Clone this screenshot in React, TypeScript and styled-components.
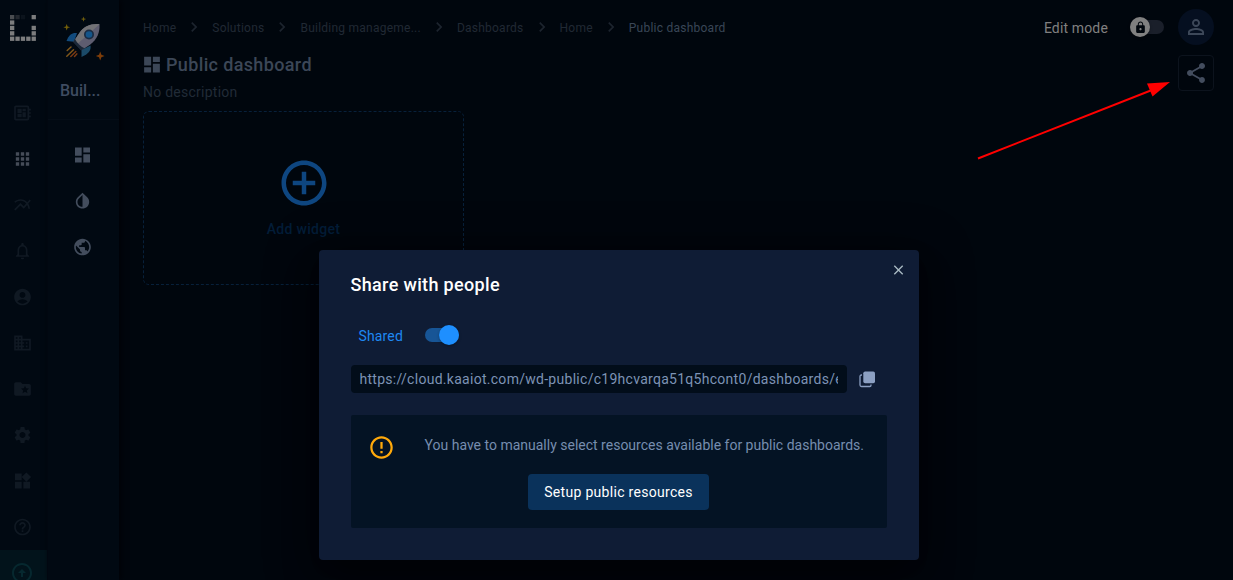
import React from 'react';
import styled, { createGlobalStyle } from 'styled-components';
import {
  MdDeveloperBoard, MdApps, MdMultilineChart, MdNotificationsNone, MdAccountCircle, MdBusiness,
  MdFolderSpecial, MdSettings, MdWidgets, MdHelpOutline, MdArrowCircleUp, MdDashboard, MdInvertColors,
  MdPublic, MdChevronRight, MdLock, MdPersonOutline, MdShare, MdAddCircleOutline, MdErrorOutline, MdClose,
} from 'react-icons/md';

const GlobalStyle = createGlobalStyle`
  * { box-sizing: border-box; }
  body { margin: 0; background: #00060d; font-family: Roboto, "Liberation Sans", sans-serif; overflow: hidden; }
  svg { display: block; flex: none; }
`;

const Page = styled.div`
  display: flex;
  height: 580px;
  width: 1233px;
  position: relative;
  overflow: hidden;
  background: #00060d;
`;

const Rail = styled.nav`
  width: 47px;
  height: 580px;
  flex: none;
  display: flex;
  flex-direction: column;
  background: #010912;
  overflow: hidden;
`;

const LogoSlot = styled.div`
  height: 90px;
  flex: none;
  padding: 15px 0 0 10px;
`;

const RailItem = styled.div<{ $active?: boolean }>`
  height: 46px;
  flex: none;
  display: flex;
  align-items: center;
  padding-left: 12px;
  color: ${p => (p.$active ? '#454c58' : '#101923')};
  font-size: 20px;
  svg { width: 21px; }
`;

const UpgradeItem = styled.div`
  height: 46px;
  flex: none;
  display: flex;
  justify-content: center;
  padding-right: 3px;
  align-items: center;
  background: #02131b;
  color: #06282f;
  font-size: 24px;
`;

const SolutionBar = styled.aside`
  width: 72px;
  height: 580px;
  flex: none;
  background: #010912;
  border-left: 1px solid #010710;
  box-shadow: 2px 0 6px #000207;
  display: flex;
  flex-direction: column;
`;

const SolutionHead = styled.div`
  height: 120px;
  border-bottom: 1px solid #050d17;
  padding: 15px 0 0 12px;
`;

const SolutionName = styled.div`
  margin-top: 18px;
  font-size: 16px;
  line-height: 20px;
  font-weight: 500;
  color: #3f4c61;
`;

const SolutionItem = styled.div`
  height: 46px;
  display: flex;
  align-items: center;
  padding-left: 24px;
  color: #434d5d;
  font-size: 20px;
  svg { width: 21px; }
  &:first-of-type { margin-top: 12px; }
`;

const SolutionNav = styled.div`
  display: flex;
  flex-direction: column;
`;

const Main = styled.main`
  flex: 1;
  min-width: 0;
  padding: 9px 19px 0 24px;
  display: flex;
  flex-direction: column;
`;

const TopBar = styled.header`
  height: 36px;
  display: flex;
  align-items: center;
  justify-content: space-between;
`;

const Crumbs = styled.div`
  display: flex;
  align-items: center;
  font-size: 12px;
  letter-spacing: 0.24px;
  line-height: 20px;
  color: #202934;
  svg { margin: 0 8px; font-size: 20px; color: #1c242e; }
`;

const Crumb = styled.span<{ $current?: boolean }>`
  padding-top: 2px;
  color: ${p => (p.$current ? '#3a4657' : 'inherit')};
`;

const Tools = styled.div`
  display: flex;
  align-items: center;
`;

const EditLabel = styled.span`
  padding-top: 2px;
  font-size: 14px;
  letter-spacing: 0.15px;
  color: #808080;
  margin-right: 22px;
`;

const Track = styled.div<{ $on?: boolean }>`
  width: 34px;
  height: 14px;
  border-radius: 7px;
  display: flex;
  align-items: center;
  justify-content: ${p => (p.$on ? 'flex-end' : 'flex-start')};
  background: ${p => (p.$on ? '#175596' : '#1a1f2a')};
`;

const Thumb = styled.div<{ $on?: boolean }>`
  width: 20px;
  height: 20px;
  flex: none;
  border-radius: 50%;
  display: flex;
  align-items: center;
  justify-content: center;
  font-size: 13px;
  background: ${p => (p.$on ? '#1e8fff' : '#808080')};
  color: #00060d;
  box-shadow: 0 1px 3px rgba(0, 0, 0, 0.3);
`;

const Avatar = styled.div`
  width: 36px;
  height: 36px;
  border-radius: 50%;
  margin-left: 14px;
  display: flex;
  align-items: center;
  justify-content: center;
  background: #050f20;
  color: #3d4859;
  font-size: 24px;
`;

const TitleRow = styled.div`
  height: 38px;
  display: flex;
  justify-content: space-between;
`;

const Title = styled.h1`
  margin: 0 0 0 -2px;
  height: 38px;
  display: flex;
  align-items: center;
  gap: 3px;
  font-size: 18px;
  font-weight: 500;
  letter-spacing: 0.36px;
  color: #3c4757;
  svg { font-size: 21px; width: 22px; }
`;

const ShareButton = styled.div`
  width: 36px;
  height: 36px;
  margin-top: 10px;
  border: 1px solid #0c131d;
  border-radius: 4px;
  display: flex;
  align-items: center;
  justify-content: center;
  font-size: 24px;
  color: #434d5e;
`;

const Description = styled.p`
  margin: -1px 0 0;
  height: 20px;
  line-height: 20px;
  font-size: 14px;
  letter-spacing: 0.25px;
  color: #212b37;
`;

const AddCard = styled.div`
  width: 321px;
  height: 174px;
  margin-top: 9px;
  display: flex;
  flex-direction: column;
  align-items: center;
  padding-top: 44px;
  gap: 11px;
  border: 1px dashed #07203a;
  border-radius: 6px;
  font-size: 14px;
  font-weight: 500;
  letter-spacing: 0.3px;
  color: #031d38;
  svg { font-size: 54px; color: #0e4680; }
`;

const Dialog = styled.section`
  position: absolute;
  left: 319px;
  top: 250px;
  width: 600px;
  height: 310px;
  border-radius: 4px;
  background: #0f1c35;
  box-shadow: 0 11px 15px -7px rgba(0,0,0,.2), 0 24px 38px 3px rgba(0,0,0,.14), 0 9px 46px 8px rgba(0,0,0,.4);
  padding: 22px 32px 0;
  display: flex;
  flex-direction: column;
`;

const DialogHead = styled.div`
  display: flex;
  justify-content: space-between;
  height: 26px;
`;

const DialogTitle = styled.h2`
  margin: 0 0 0 -0.5px;
  font-size: 18px;
  line-height: 26px;
  font-weight: 500;
  letter-spacing: 0.34px;
  color: #fff;
`;

const CloseIcon = styled.div`
  margin: -10px -20px 0 0;
  font-size: 16px;
  color: #a9bac3;
  svg { width: 17px; }
`;

const SharedRow = styled.div`
  height: 20px;
  margin: 27px 0 0 7.5px;
  display: flex;
  align-items: center;
  gap: 22.5px;
  font-size: 14px;
  letter-spacing: 0.15px;
  color: #1e88f2;
`;

const SharedLabel = styled.span`
  padding-top: 2px;
`;

const LinkRow = styled.div`
  margin-top: 20px;
  display: flex;
  align-items: center;
  gap: 12.5px;
`;

const LinkInput = styled.input`
  width: 495.5px;
  height: 28px;
  padding: 0 8.5px;
  border: 0;
  outline: 0;
  border-radius: 4px;
  background: #020d1a;
  font: 14px/28px Roboto, "Liberation Sans", sans-serif;
  letter-spacing: 0.28px;
  color: #7d93b5;
`;

const Notice = styled.div`
  width: 536px;
  height: 113px;
  margin-top: 22px;
  border-radius: 2px;
  background: #041324;
  padding: 19.5px 23px 0 17px;
  display: flex;
  justify-content: space-between;
  > svg { margin-top: -0.5px; font-size: 27px; color: #ffa90b; }
`;

const NoticeBody = styled.div`
  display: flex;
  flex-direction: column;
  align-items: flex-start;
  font-size: 14px;
  line-height: 20px;
  color: #768daf;
  white-space: nowrap;
`;

const SetupButton = styled.button`
  margin: 19.5px 0 0 103px;
  width: 181px;
  height: 36px;
  padding: 0 0 0 1px;
  border: 0;
  border-radius: 4px;
  background: #0a325b;
  color: #fff;
  font: 14px Roboto, sans-serif;
  letter-spacing: 0.3px;
`;

const ArrowOverlay = styled.svg`
  position: absolute;
  left: 970px;
  top: 70px;
`;

const LOGO_CELLS: [number, number, string][] = [
  [0, 0, '#4a4d51'], [1, 0, '#22272e'], [2, 0, '#0b131c'], [4, 0, '#7c7d7e'],
  [0, 1, '#7c7d7e'], [0, 2, '#7c7d7e'], [4, 2, '#7c7d7e'], [0, 3, '#7c7d7e'], [4, 3, '#7c7d7e'],
  [0, 4, '#7c7d7e'], [1, 4, '#7c7d7e'], [2, 4, '#7c7d7e'], [3, 4, '#7c7d7e'], [4, 4, '#7c7d7e'],
];

const Logo = () => (
  <svg width="26" height="26" viewBox="0 0 26 26">
    {LOGO_CELLS.map(([c, r, fill]) => (
      <rect key={`${c}-${r}`} x={c * 5.4} y={r * 5.4} width="4.3" height="4.3" fill={fill} />
    ))}
  </svg>
);

const Rocket = () => (
  <svg width="48" height="48" viewBox="60 15 48 48">
    <path d="M83.5 16.5l.7 2 2 .6-2 .7-.7 2-.7-2-2-.7 2-.6z" fill="#6f5e0d" />
    <path d="M66.7 24l.9 2.5 2.5.8-2.5.8-.9 2.5-.9-2.5-2.5-.8 2.5-.8z" fill="#746009" />
    <path d="M100.2 51.5l1.2 3.2 3.2 1.3-3.2 1.2-1.2 3.2-1.2-3.2-3.2-1.2 3.2-1.3z" fill="#7d3d09" />
    <path d="M77 33c-5-.5-8 1.5-10.5 8l7.5.8z" fill="#124b7d" />
    <path d="M90.5 45.5c.8 5-2 8.5-9 11.5v-7z" fill="#1b4a68" />
    <path d="M99.5 24.2c-8-1-16 2.500-20 8.500l-6 9 8 8.500 8.500-5.500c7.500-5.500 10-13 9.500-20.500z" fill="#5e5d70" />
    <path d="M99.500 24.200c-8-1-16 2.500-20 8.500l-6 9 3 3z" fill="#727276" />
    <path d="M75 39l-2 3 8 8.500 3.500-2.200c-4-1.800-7.500-5-9.500-9.300z" fill="#1b2838" />
    <circle cx="89" cy="34.500" r="5" fill="#1b2c43" />
    <circle cx="89" cy="34.500" r="3.300" fill="#14558a" />
    <path d="M67.2 50.5l3.800-3.500M66.800 56.200l6.700-6.400" stroke="#80571a" strokeWidth="1.500" strokeLinecap="round" />
    <path d="M70.800 56.500l5-5M74.500 56.500l2.300-2.600" stroke="#7b3b13" strokeWidth="1.500" strokeLinecap="round" />
  </svg>
);

const CopyIcon = () => (
  <svg width="17" height="17" viewBox="0 0 17 17">
    <rect x="4.3" y="0.5" width="11.7" height="11.7" rx="1.8" fill="#8ca0c3" />
    <path d="M3 4H2.4Q1 4 1 5.400V14q0 1.500 1.500 1.500h8.200q1.300 0 1.300-1.300V13.500" fill="none" stroke="#8ca0c3" strokeWidth="1.300" />
  </svg>
);

const RAIL_ICONS = [
  MdDeveloperBoard, MdApps, MdMultilineChart, MdNotificationsNone, MdAccountCircle,
  MdBusiness, MdFolderSpecial, MdSettings, MdWidgets, MdHelpOutline,
];

const CRUMBS = ['Home', 'Solutions', 'Building manageme...', 'Dashboards', 'Home', 'Public dashboard'];

export default function App() {
  return (
    <>
      <GlobalStyle />
      <Page>
        <Rail>
          <LogoSlot><Logo /></LogoSlot>
          {RAIL_ICONS.map((Icon, i) => (
            <RailItem key={i} $active={i === 1}><Icon /></RailItem>
          ))}
          <UpgradeItem><MdArrowCircleUp /></UpgradeItem>
        </Rail>
        <SolutionBar>
          <SolutionHead>
            <Rocket />
            <SolutionName>Buil...</SolutionName>
          </SolutionHead>
          <SolutionNav>
            <SolutionItem><MdDashboard /></SolutionItem>
            <SolutionItem><MdInvertColors /></SolutionItem>
            <SolutionItem><MdPublic /></SolutionItem>
          </SolutionNav>
        </SolutionBar>
        <Main>
          <TopBar>
            <Crumbs>
              {CRUMBS.map((label, i) => (
                <React.Fragment key={i}>
                  {i > 0 && <MdChevronRight />}
                  <Crumb $current={i === CRUMBS.length - 1}>{label}</Crumb>
                </React.Fragment>
              ))}
            </Crumbs>
            <Tools>
              <EditLabel>Edit mode</EditLabel>
              <Track><Thumb><MdLock /></Thumb></Track>
              <Avatar><MdPersonOutline /></Avatar>
            </Tools>
          </TopBar>
          <TitleRow>
            <Title><MdDashboard />Public dashboard</Title>
            <ShareButton><MdShare /></ShareButton>
          </TitleRow>
          <Description>No description</Description>
          <AddCard>
            <MdAddCircleOutline />
            Add widget
          </AddCard>
        </Main>
        <Dialog>
          <DialogHead>
            <DialogTitle>Share with people</DialogTitle>
            <CloseIcon><MdClose /></CloseIcon>
          </DialogHead>
          <SharedRow>
            <SharedLabel>Shared</SharedLabel>
            <Track $on><Thumb $on /></Track>
          </SharedRow>
          <LinkRow>
            <LinkInput readOnly value="https://cloud.kaaiot.com/wd-public/c19hcvarqa51q5hcont0/dashboards/e" />
            <CopyIcon />
          </LinkRow>
          <Notice>
            <MdErrorOutline />
            <NoticeBody>
              You have to manually select resources available for public dashboards.
              <SetupButton>Setup public resources</SetupButton>
            </NoticeBody>
          </Notice>
        </Dialog>
        <ArrowOverlay width="210" height="95" viewBox="970 70 210 95">
          <path d="M978 158.500L1152 90" stroke="#f00" strokeWidth="2" />
          <path d="M1170 82l-23 1.500 5.500 13z" fill="#f00" />
        </ArrowOverlay>
      </Page>
    </>
  );
}
